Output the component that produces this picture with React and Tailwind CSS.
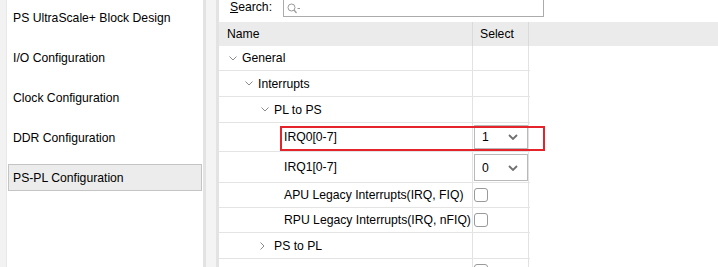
import React from "react";

function ChevDown() {
  return (
    <svg width="8" height="5" viewBox="0 0 8 5" className="shrink-0">
      <path d="M0.5 0.5 L4 4 L7.5 0.5" fill="none" stroke="#8a8a8a" strokeWidth="1" />
    </svg>
  );
}

function ChevRight() {
  return (
    <svg width="5" height="8" viewBox="0 0 5 8" className="shrink-0">
      <path d="M0.5 0.5 L4 4 L0.5 7.5" fill="none" stroke="#8a8a8a" strokeWidth="1" />
    </svg>
  );
}

function Dropdown({ value, h, mt }) {
  return (
    <div
      className={`ml-[1px] w-[54px] shrink-0 border border-[#b9b9b9] bg-white flex items-center justify-between pl-[7px] pr-[9px] ${h} ${mt}`}
    >
      <span>{value}</span>
      <svg width="10" height="6" viewBox="0 0 10 6">
        <path d="M1 1 L5 5 L9 1" fill="none" stroke="#707070" strokeWidth="1.8" />
      </svg>
    </div>
  );
}

function Checkbox({ mt = "" }) {
  return (
    <div className={`ml-[1px] w-[14px] h-[14px] shrink-0 rounded-[3px] border-[1.5px] border-[#9a9a9a] bg-white ${mt}`} />
  );
}

function Row({ h, pad, chevron, label, right, align = "items-center" }) {
  return (
    <div className={`flex shrink-0 ${h} border-b border-[#e4e4e4]`}>
      <div className={`w-[253px] flex items-center ${pad}`}>
        {chevron === "down" && (
          <span className="w-[13px] flex items-center">
            <ChevDown />
          </span>
        )}
        {chevron === "right" && (
          <span className="w-[14px] flex items-center">
            <ChevRight />
          </span>
        )}
        <span className="whitespace-nowrap">{label}</span>
      </div>
      <div className={`w-[57px] border-l border-r border-[#e2e2e2] flex ${align}`}>{right}</div>
    </div>
  );
}

export default function App() {
  const items = [
    "PS UltraScale+ Block Design",
    "I/O Configuration",
    "Clock Configuration",
    "DDR Configuration",
    "PS-PL Configuration",
  ];
  return (
    <div className="w-[718px] h-[267px] flex overflow-hidden bg-white text-[12.2px] leading-[14px] text-black font-['Liberation_Sans',Arial,sans-serif]">
      <div className="w-[7px] shrink-0 bg-[#f2f2f2] border-r border-[#e8e8e8]" />
      <div className="w-[196px] shrink-0 bg-white pt-[4px] flex flex-col gap-[13px]">
        {items.map((t, i) => (
          <div
            key={t}
            className={`h-[27px] shrink-0 mx-[1px] pl-[4px] flex items-center border ${
              i === 4 ? "border-[#c4c4c4] bg-[#ececec]" : "border-transparent"
            }`}
          >
            {t}
          </div>
        ))}
      </div>
      <div className="w-[3px] shrink-0 bg-[#e3e3e3]" />
      <div className="w-[10px] shrink-0 bg-[#f4f4f4]" />
      <div className="w-[3px] shrink-0 bg-[#e3e3e3]" />
      <div className="flex-1 relative flex flex-col bg-white">
        <div className="h-[22px] shrink-0 flex items-start pl-[11px]">
          <span>
            <span className="underline">S</span>earch:
          </span>
          <div className="ml-[11px] w-[261px] h-[22px] -mt-[5px] border border-[#ababab] bg-white flex items-center pl-[3px] pt-[5px]">
            <svg width="14" height="11" viewBox="0 0 14 11">
              <circle cx="4.5" cy="4.5" r="3.5" fill="none" stroke="#9a9a9a" strokeWidth="1" />
              <path d="M7 7 L9.5 10" stroke="#9a9a9a" strokeWidth="1.2" />
              <path d="M10.5 5.5 L13 5.5" stroke="#9a9a9a" strokeWidth="1" />
            </svg>
          </div>
        </div>
        <div className="h-[24px] shrink-0 bg-[#ebebeb] flex">
          <div className="w-[253px] flex items-center pl-[8px]">Name</div>
          <div className="w-[57px] border-l border-r border-[#dadada] flex items-center pl-[7px]">
            Select
          </div>
        </div>
        <div className="w-[311px] flex flex-col">
          <Row h="h-[25px]" pad="pl-[10px]" chevron="down" label="General" />
          <Row h="h-[26px]" pad="pl-[26px]" chevron="down" label="Interrupts" />
          <Row h="h-[26px]" pad="pl-[42px]" chevron="down" label="PL to PS" />
          <Row
            h="h-[29px]"
            pad="pl-[65px]"
            label="IRQ0[0-7]"
            align="items-start"
            right={<Dropdown value="1" h="h-[24px]" mt="mt-[2px]" />}
          />
          <Row
            h="h-[31px]"
            pad="pl-[65px]"
            label="IRQ1[0-7]"
            align="items-start"
            right={<Dropdown value="0" h="h-[27px]" mt="mt-[2px]" />}
          />
          <Row h="h-[25px]" pad="pl-[65px]" label="APU Legacy Interrupts(IRQ, FIQ)" right={<Checkbox />} />
          <Row h="h-[25px]" pad="pl-[65px]" label="RPU Legacy Interrupts(IRQ, nFIQ)" right={<Checkbox />} />
          <Row h="h-[26px]" pad="pl-[41px]" chevron="right" label="PS to PL" />
          <Row h="h-[26px]" pad="pl-[65px]" label="" align="items-start" right={<Checkbox mt="mt-[5px]" />} />
        </div>
        <div className="absolute left-[61px] top-[126px] w-[265px] h-[25px] border-2 border-[#e4232b]" />
      </div>
    </div>
  );
}
